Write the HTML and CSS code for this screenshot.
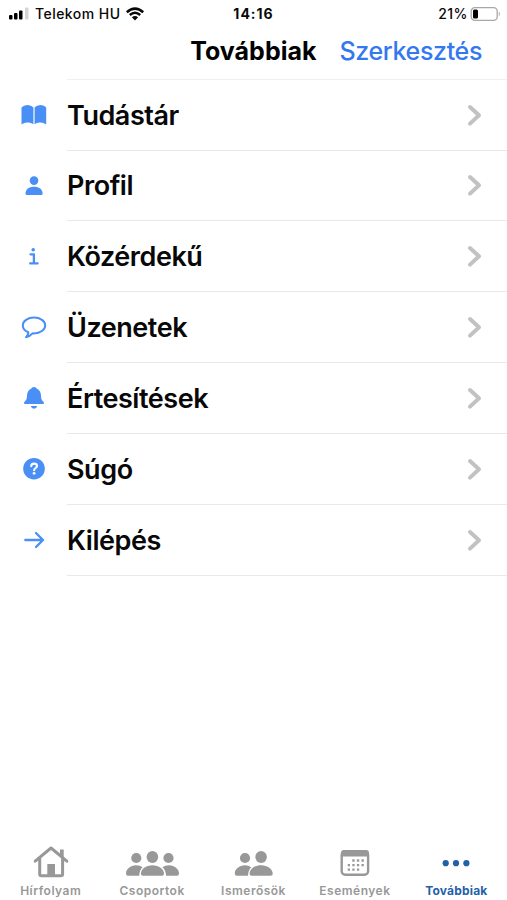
FILE: index.html
```html
<!DOCTYPE html>
<html lang="hu">
<head>
    <meta charset="UTF-8">
    <meta name="viewport" content="width=device-width, initial-scale=1.0">
    <title>Továbbiak</title>
    <link rel="stylesheet" href="styles.css">
</head>
<body>

    <!-- Status bar -->
    <div class="status">
        <div class="status-left">
            <svg class="signal" width="22" height="14" viewBox="0 0 22 14">
                <rect x="1" y="8" width="3.5" height="4.5" rx="1"/>
                <rect x="6" y="6" width="3.5" height="6.5" rx="1"/>
                <rect x="11" y="3.5" width="3.5" height="9" rx="1"/>
                <rect class="off" x="17" y="0.5" width="3.5" height="12" rx="1"/>
            </svg>
            <span class="carrier">Telekom HU</span>
            <svg class="wifi" width="20" height="14" viewBox="0 0 20 14">
                <path d="M1.8 5.2Q10 -2 18.2 5.2M4.8 8Q10 3.6 15.2 8"/>
                <path class="dot" d="M6.9 10.3Q10 7.8 13.1 10.3L10 13.6Z"/>
            </svg>
        </div>
        <span class="time">14:16</span>
        <div class="status-right">
            <span class="percent">21%</span>
            <svg width="32" height="16" viewBox="0 0 32 16">
                <rect class="case" x="1.2" y="1.7" width="26" height="12.6" rx="3.6"/>
                <rect x="3" y="3.5" width="5" height="9" rx="1.5"/>
                <path class="cap" d="M28.8 5.5Q31 8 28.8 10.5Z"/>
            </svg>
        </div>
    </div>

    <!-- Header -->
    <header class="header">
        <h1 class="title">Továbbiak</h1>
        <a class="edit">Szerkesztés</a>
    </header>

    <!-- Menu -->
    <ul class="menu">
        <li class="row">
            <svg class="icon" viewBox="0 0 28 28"><path d="M1.5 6.5Q3.5 4 7.5 4T13.4 6.5V23.3Q10.5 21.2 7.5 21.6Q4.5 21.4 1.5 23.5ZM14.6 6.5Q16.5 4 20.5 4T26.2 6.5V23.5Q23 21.4 20.3 21.6Q17.3 21.2 14.6 23.3Z"/></svg>
            <div class="cell"><span class="label">Tudástár</span><svg class="chevron" viewBox="0 0 16 24"><path d="M3 4L12 12.3L3 20.6"/></svg></div>
        </li>
        <li class="row">
            <svg class="icon" viewBox="0 0 28 28"><circle cx="14" cy="8.6" r="4.3"/><path d="M5.5 21.5C5.5 17.5 9 14.8 14 14.8S22.6 17.5 22.6 21.5Q22.6 23 21 23H7Q5.5 23 5.5 21.5Z"/></svg>
            <div class="cell"><span class="label">Profil</span><svg class="chevron" viewBox="0 0 16 24"><path d="M3 4L12 12.3L3 20.6"/></svg></div>
        </li>
        <li class="row">
            <svg class="icon" viewBox="0 0 28 28"><circle cx="13.2" cy="6.7" r="1.8"/><path class="line" d="M10.5 11.3H13.9V20.4M10.2 20.4H17.6"/></svg>
            <div class="cell"><span class="label">Közérdekű</span><svg class="chevron" viewBox="0 0 16 24"><path d="M3 4L12 12.3L3 20.6"/></svg></div>
        </li>
        <li class="row">
            <svg class="icon" viewBox="0 0 28 28"><path class="line thin" d="M8.3 18.2C4.8 16.8 2.8 14.3 2.8 11.4C2.8 7 7.8 3.6 14 3.6S25.2 7 25.2 11.4S20.2 19.4 14 19.4L12.5 19.3Q9.5 22.8 6 23.2Q8.7 20.8 8.3 18.2Z"/></svg>
            <div class="cell"><span class="label">Üzenetek</span><svg class="chevron" viewBox="0 0 16 24"><path d="M3 4L12 12.3L3 20.6"/></svg></div>
        </li>
        <li class="row">
            <svg class="icon" viewBox="0 0 28 28"><path d="M14 3C15.5 3 16.3 3.8 16.6 4.4C19.6 5.6 20.8 8.2 21 11.7C21.2 15.4 21.8 16 23.2 17.4C24.6 18.8 24 20 22.7 20H5.3C4 20 3.4 18.8 4.8 17.4C6.2 16 6.8 15.4 7 11.7C7.2 8.2 8.4 5.6 11.4 4.4C11.7 3.8 12.5 3 14 3ZM10.8 22H17.2Q16.5 24.8 14 24.8T10.8 22Z"/></svg>
            <div class="cell"><span class="label">Értesítések</span><svg class="chevron" viewBox="0 0 16 24"><path d="M3 4L12 12.3L3 20.6"/></svg></div>
        </li>
        <li class="row">
            <svg class="icon" viewBox="0 0 28 28"><circle cx="14" cy="13.7" r="10.8"/><path class="mark" d="M11.2 11.1C11.3 9.4 12.4 8.6 14.1 8.6C15.9 8.6 17 9.5 17 11C17 13 14.1 13 14.1 15.3"/><circle class="mark-dot" cx="14.1" cy="18.3" r="1.4"/></svg>
            <div class="cell"><span class="label">Súgó</span><svg class="chevron" viewBox="0 0 16 24"><path d="M3 4L12 12.3L3 20.6"/></svg></div>
        </li>
        <li class="row">
            <svg class="icon" viewBox="0 0 28 28"><path class="line" d="M5.3 14H23M16 7L23 14L16 21"/></svg>
            <div class="cell"><span class="label">Kilépés</span><svg class="chevron" viewBox="0 0 16 24"><path d="M3 4L12 12.3L3 20.6"/></svg></div>
        </li>
    </ul>

    <!-- Bottom tabs -->
    <nav class="tabs">
        <div class="tab">
            <svg viewBox="0 0 60 36"><path class="stroke" d="M14.2 17.2L30 4L45.8 17.2M18.7 14V30Q18.7 31.8 20.5 31.8H39.8Q41.6 31.8 41.6 30V14"/><path d="M39 5.5H42.7V15L39 12ZM26.3 20H34V32H26.3Z"/></svg>
            <span>Hírfolyam</span>
        </div>
        <div class="tab">
            <svg viewBox="0 0 60 36"><circle cx="14.3" cy="14" r="5.1"/><circle cx="46.5" cy="14" r="5.1"/><path d="M4 29.5C4 25 8.5 21.3 14 21.3Q18 21.3 20.6 23.2Q17.5 26 17.2 31.8H6Q4 31.8 4 29.5ZM57 29.5C57 25 52.5 21.3 47 21.3Q43 21.3 40.4 23.2Q43.8 26 44.1 31.8H55Q57 31.8 57 29.5Z"/><ellipse cx="30.4" cy="13" rx="5.8" ry="6.1"/><path d="M18.9 29.8C18.9 25 24 21.2 30.4 21.2S42 25 42 29.8Q42 31.8 40 31.8H21Q18.9 31.8 18.9 29.8Z"/></svg>
            <span>Csoportok</span>
        </div>
        <div class="tab">
            <svg viewBox="0 0 60 36"><circle cx="21" cy="14" r="5.1"/><path d="M10.8 29.5C10.8 25 15.3 21.3 21 21.3Q24.5 21.3 27.3 23.2Q24.2 26 24 31.8H12.8Q10.8 31.8 10.8 29.5Z"/><ellipse cx="37.1" cy="13" rx="5.8" ry="6.1"/><path d="M25.6 29.8C25.6 25 30.7 21.2 37.1 21.2S48.7 25 48.7 29.8Q48.7 31.8 46.7 31.8H27.7Q25.6 31.8 25.6 29.8Z"/></svg>
            <span>Ismerősök</span>
        </div>
        <div class="tab">
            <svg viewBox="0 0 60 36"><rect class="stroke thin" x="16.7" y="7.3" width="26.4" height="23.4" rx="3.5"/><path d="M16 12.5V9Q16 6 19 6H41Q44 6 44 9V12.5Z"/><path class="days" d="M27.3 16.5H38.8M22.7 21.1H38.8M22.7 25.6H34.2"/></svg>
            <span>Események</span>
        </div>
        <div class="tab active">
            <svg viewBox="0 0 60 36"><circle cx="19.7" cy="19.2" r="3.1"/><circle cx="30" cy="19.2" r="3.1"/><circle cx="40.4" cy="19.2" r="3.1"/></svg>
            <span>Továbbiak</span>
        </div>
    </nav>

</body>
</html>
```
FILE: styles.css
```css
* {
    box-sizing: border-box;
}
body {
    margin: 0;
    height: 900px;
    display: flex;
    flex-direction: column;
    overflow: hidden;
    background-color: #fff;
    color: #080808;
    font-family: Inter, "Liberation Sans", sans-serif;
}
svg {
    display: block;
    flex: none;
}

/* Status bar */
.status {
    display: grid;
    grid-template-columns: 1fr auto 1fr;
    align-items: center;
    height: 27px;
    padding: 0 5px 0 8px;
    font-size: 14px;
    font-weight: 500;
}
.status-left, .status-right {
    display: flex;
    align-items: center;
}
.status-right {
    justify-content: flex-end;
    gap: 2px;
}
.carrier {
    margin: 0 5px 0 5px;
    letter-spacing: 0.45px;
}
.time {
    font-weight: 700;
    letter-spacing: 1px;
    margin-right: 3px;
}
.percent {
    letter-spacing: 0.5px;
}
.off {
    fill: #d5d5d5;
}
.wifi {
    fill: none;
    stroke: #080808;
    stroke-width: 2.5;
}
.wifi .dot {
    fill: #080808;
    stroke: none;
}
.case {
    fill: none;
    stroke: #a8a8a8;
    stroke-width: 1.3;
}
.cap {
    fill: #a8a8a8;
}

/* Header */
.header {
    display: flex;
    justify-content: flex-end;
    align-items: center;
    height: 52px;
    padding: 0 25px 4px 0;
    gap: 23px;
    font-size: 25px;
}
.title {
    margin: 0;
    font-size: 25px;
    font-weight: 700;
    color: #000;
}
.edit {
    color: #3478f0;
    font-weight: 500;
    letter-spacing: -0.35px;
}

/* Menu */
.menu {
    margin: 0;
    padding: 0;
    list-style: none;
}
.row {
    display: flex;
    align-items: center;
    height: 70.85px;
    padding-left: 20px;
    gap: 19px;
}
.row:first-child {
    height: 71.5px;
}
.row:first-child .cell {
    border-top: 1px solid #f0f0f0;
}
.icon {
    width: 28px;
    height: 28px;
    fill: #4a8ff5;
}
.icon .line {
    fill: none;
    stroke: #4a8ff5;
    stroke-width: 2.3;
    stroke-linecap: round;
    stroke-linejoin: round;
}
.icon .thin {
    stroke-width: 2;
}
.icon .mark {
    fill: none;
    stroke: #fff;
    stroke-width: 2.1;
    stroke-linecap: round;
}
.icon .mark-dot {
    fill: #fff;
}
.cell {
    flex: 1;
    display: flex;
    align-items: center;
    justify-content: space-between;
    height: 100%;
    padding-right: 24px;
    border-bottom: 1px solid #e8e8e8;
}
.label {
    padding-top: 1px;
    font-size: 27px;
    font-weight: 600;
    letter-spacing: -0.45px;
    white-space: nowrap;
}
.chevron {
    width: 16px;
    height: 24px;
    fill: none;
    stroke: #c2c2c4;
    stroke-width: 4;
    stroke-linecap: round;
    stroke-linejoin: round;
}

/* Bottom tabs */
.tabs {
    display: flex;
    margin-top: auto;
    height: 56px;
    color: #989898;
}
.tab {
    flex: 1;
    display: flex;
    flex-direction: column;
    align-items: center;
    fill: #989898;
    font-size: 12px;
    font-weight: 600;
    letter-spacing: 0.5px;
    line-height: 16px;
}
.tab svg {
    width: 60px;
    height: 36px;
    margin-bottom: 3px;
}
.tab .stroke {
    fill: none;
    stroke: #989898;
    stroke-width: 3;
    stroke-linecap: round;
    stroke-linejoin: round;
}
.tab .thin {
    stroke-width: 2.4;
}
.days {
    stroke: #989898;
    stroke-width: 2.3;
    stroke-dasharray: 2.3 2.3;
}
.tab.active {
    color: #255fa8;
    fill: #255fa8;
    font-weight: 700;
    letter-spacing: 0.2px;
}
```
